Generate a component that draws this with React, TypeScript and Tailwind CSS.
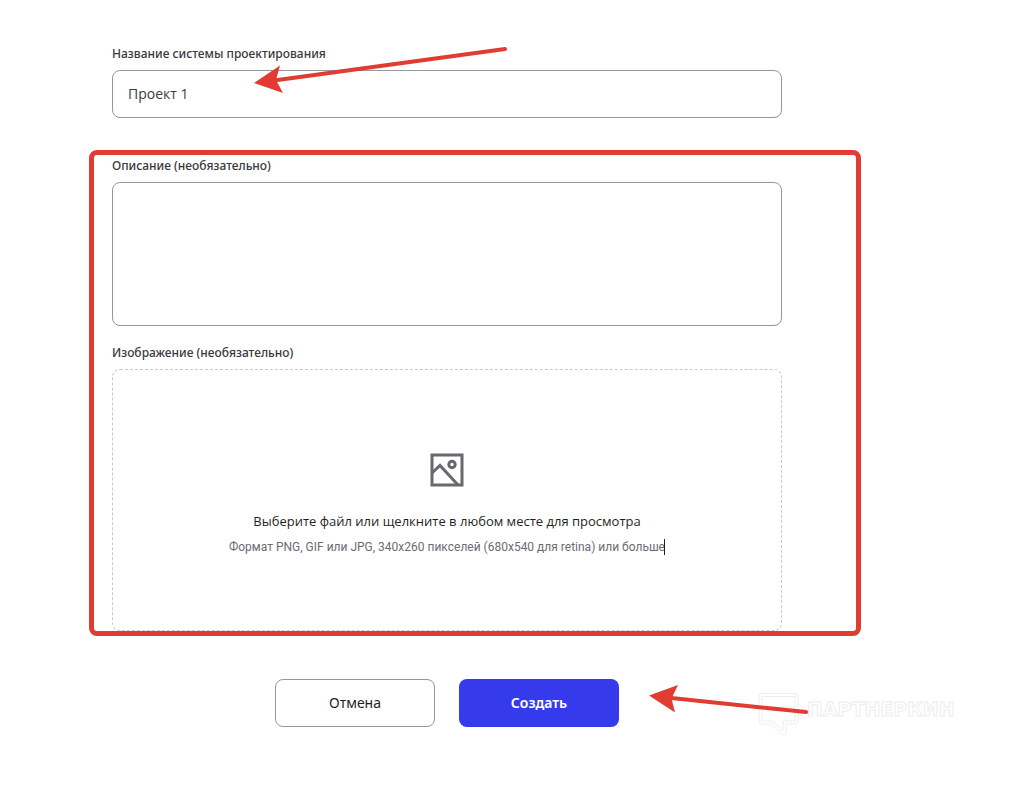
import { useState } from "react"

const labelClass = "block text-xs leading-5 font-medium text-[#38383d]"
const fieldClass = "block w-full rounded-lg border border-[#97979b] bg-white px-[15px] text-sm text-[#3c3c41] outline-none"

function ImageIcon() {
  return (
    <svg viewBox="0 0 34 34" className="size-[34px]" fill="none" stroke="#68686f" strokeWidth="3" aria-hidden="true">
      <rect x="2" y="2" width="30" height="30" />
      <path d="M2 20 L10 12.5 L28 32" />
      <circle cx="22" cy="11.5" r="3.2" />
    </svg>
  )
}

function NameArrow() {
  return (
    <svg
      viewBox="0 0 254 48"
      className="pointer-events-none absolute top-[46px] left-[254px] h-12 w-[254px]"
      aria-hidden="true"
    >
      <path d="M20 34.5 L251 3" stroke="#e03c31" strokeWidth="4" strokeLinecap="round" />
      <path d="M0 37 L26 19.5 L22 34 L29 47 Z" fill="#e03c31" />
    </svg>
  )
}

function CreateArrow() {
  return (
    <svg
      viewBox="0 0 160 30"
      className="pointer-events-none absolute top-[684px] left-[649px] h-[30px] w-40"
      aria-hidden="true"
    >
      <path d="M20 13.8 L157 28" stroke="#e03c31" strokeWidth="4" strokeLinecap="round" />
      <path d="M0 11.5 L29 1 L22.5 14.5 L26 28.5 Z" fill="#e03c31" />
    </svg>
  )
}

function Watermark() {
  return (
    <svg
      viewBox="0 0 204 48"
      className="pointer-events-none absolute top-[690px] left-[757px] h-12 w-[204px]"
      fill="none"
      stroke="#ededed"
      aria-hidden="true"
    >
      <path d="M5 3.5 H38 Q41 3.5 41 6.5 V31 Q41 34 38 34 H29 V42 Q28 46 24.5 44 L14 34 H5 Q2 34 2 31 V6.5 Q2 3.5 5 3.5 Z" />
      <path d="M5 6.5 H38 V31 H26 V41 L15.5 31 H5 Z" />
      <path d="M5 17 H38 M8 18 Q9 21 12 21 H16 Q19 21 19 18 M24 18 Q24 21 27 21 H32 Q35 21 35 18" />
      <text x="50" y="26" fontSize="19" fontWeight="700" fontFamily="DejaVu Sans, sans-serif">
        ПАРТНЕРКИН
      </text>
    </svg>
  )
}

export default function App() {
  const [name, setName] = useState("Проект 1")
  const [description, setDescription] = useState("")

  return (
    <main className="relative overflow-hidden bg-white pt-11 pb-[60px] pl-28 font-['Noto_Sans',sans-serif]">
      <form className="w-full max-w-[670px]" onSubmit={(e) => e.preventDefault()}>
        <label htmlFor="name" className={labelClass}>
          Название системы проектирования
        </label>
        <input
          id="name"
          type="text"
          value={name}
          onChange={(e) => setName(e.target.value)}
          className={`${fieldClass} mt-1.5 h-12 pb-0.5 font-['Open_Sans',sans-serif]`}
        />

        {/* Optional fields */}
        <div className="relative mt-[38px]">
          <label htmlFor="description" className={labelClass}>
            Описание (необязательно)
          </label>
          <textarea
            id="description"
            value={description}
            onChange={(e) => setDescription(e.target.value)}
            className={`${fieldClass} mt-1.5 h-36 resize-none py-3`}
          />

          <label htmlFor="image" className={`${labelClass} mt-[17px]`}>
            Изображение (необязательно)
          </label>
          <label
            htmlFor="image"
            className="mt-1.5 flex h-[262px] cursor-pointer flex-col items-center justify-center rounded-lg border border-dashed border-[#c9c9cc] pt-2.5"
          >
            <ImageIcon />
            <span className="mt-6 font-['Open_Sans',sans-serif] text-[13px] leading-5 text-[#1f1f24]">
              Выберите файл или щелкните в любом месте для просмотра
            </span>
            <span className="mt-1.5 flex items-center font-['Roboto',sans-serif] text-xs leading-5 text-[#6c6c73]">
              Формат PNG, GIF или JPG, 340x260 пикселей (680x540 для retina) или больше
              <span className="-ml-px h-4 w-px bg-[#1f1f24]" />
            </span>
            <input id="image" type="file" accept="image/png,image/gif,image/jpeg" className="sr-only" />
          </label>

          <div className="pointer-events-none absolute -top-1.5 -right-[79px] -bottom-[5px] -left-[23px] rounded-lg border-[5px] border-[#e03c31]" />
        </div>

        {/* Actions */}
        <div className="mt-12 flex justify-center gap-6">
          <button
            type="button"
            className="h-12 w-40 rounded-lg border border-[#97979b] bg-white text-sm text-[#1f1f24]"
          >
            Отмена
          </button>
          <button type="submit" className="h-12 w-40 rounded-lg bg-[#353bec] text-sm font-semibold text-white">
            Создать
          </button>
        </div>
      </form>

      <Watermark />
      <NameArrow />
      <CreateArrow />
    </main>
  )
}
